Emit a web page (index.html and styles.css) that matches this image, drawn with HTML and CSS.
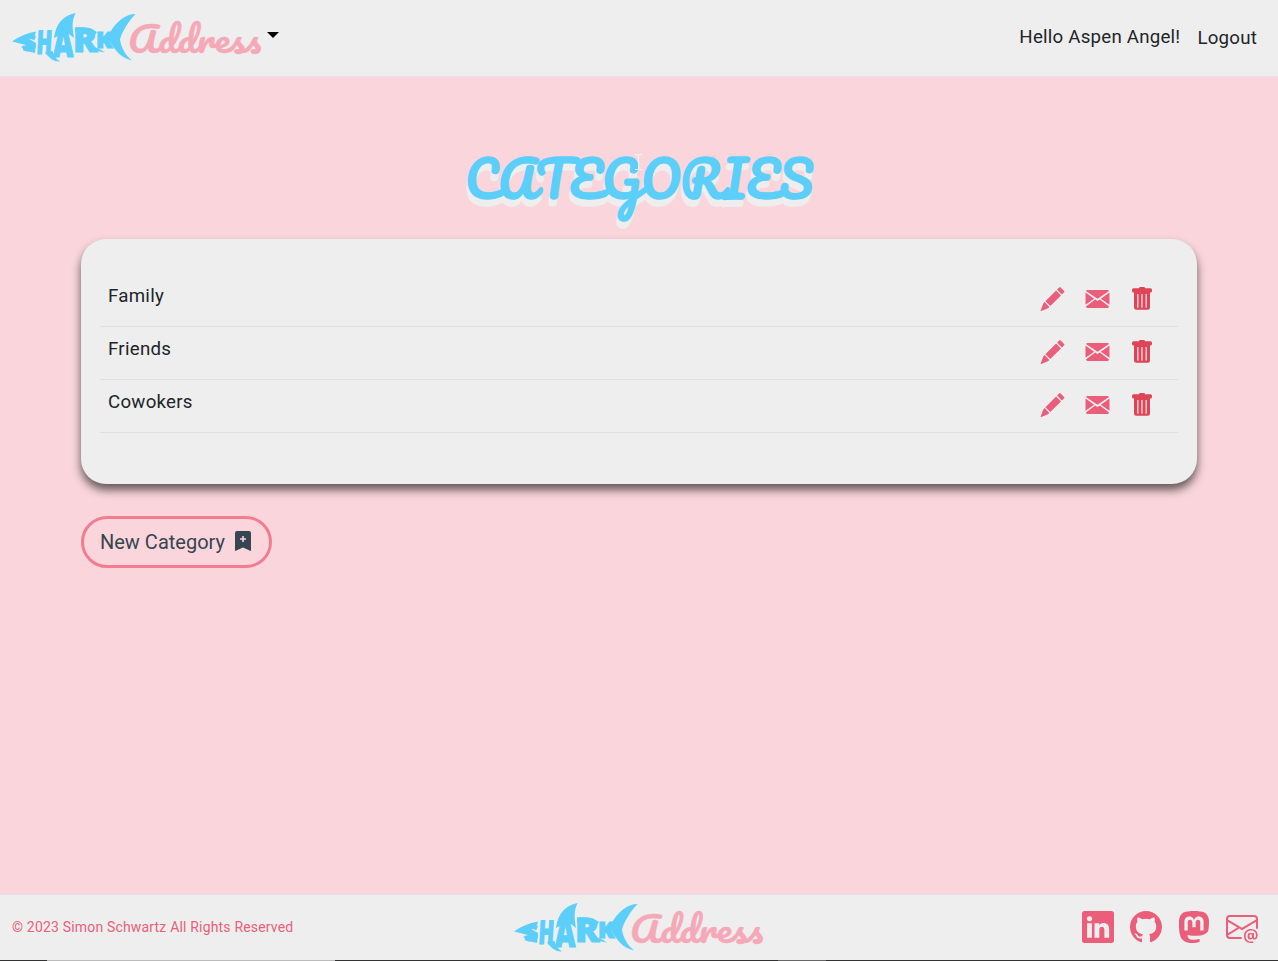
FILE: index.html
```html
<!DOCTYPE html>
<html lang="en">
<head>
<meta charset="utf-8">
<title>Shark Address - Categories</title>
<link rel="stylesheet" href="styles.css">
</head>
<body>
<svg class="sprite" aria-hidden="true">
  <symbol id="shark-body" viewBox="0 0 252 56">
    <path d="M0 29.500 Q10 22 24 19.500 L23 23 Q16 24 17 27 L24 31 L23 41 Q14 39 9 35 L14 33 Z"/>
    <path d="M42 26 C44 11 51 4 63.500 1 C60 9 60 14 62 26 L57 22 H50 Z"/>
    <path d="M33 40 L40.500 39 C42 44 44 47 48 49.500 Q39 50 33 40 Z"/>
    <path d="M63 15.500 Q77 14 85 20 L82 24 L63 20 Z"/>
    <path d="M77 35 Q84 34 93 40.500 L80 38 Z"/>
    <path d="M94 25 Q96 24 97 22 C104 10 113 2 123.500 2 C116 10 110 20 108 27.500 C109 35 113 43 120 48.500 C109 46 104 39 98 30 Z"/>
  </symbol>
  <symbol id="pencil" viewBox="0 0 24 24">
    <path d="M18.700.4a1 1 0 0 1 1.400 0l3.500 3.500a1 1 0 0 1 0 1.400L21.400 7.500 16.500 2.600zM15.600 3.500l4.900 4.900L9.800 19.100 4.900 14.200zM4.100 15.100l4.800 4.800L7.500 21.300.8 23.900Q-.2 24.200.2 23.200L2.800 16.400z"/>
  </symbol>
  <symbol id="mail" viewBox="0 0 24 18">
    <path d="M.4 1Q1 0 2.200 0H21.800Q23 0 23.600 1L12 8.700zM0 2.500L8.700 8.800 0 14.800zM24 2.500L15.300 8.800 24 14.800zM9.700 9.600L12 11l2.300-1.400 9.300 6.900Q23 18 21.800 18H2.200Q1 18 .4 16.500z"/>
  </symbol>
  <symbol id="trash" viewBox="0 0 20 23">
    <path class="trash-bars" d="M4 6h12v14H4z"/>
    <path d="M7 1.200Q7 0 8.200 0h3.600Q13 0 13 1.200H18.500Q20 1.200 20 2.700V4Q20 5.500 18.500 5.500H18V20.500Q18 22.700 15.800 22.700H4.200Q2 22.700 2 20.500V5.500H1.500Q0 5.500 0 4V2.700Q0 1.200 1.500 1.200zM5 7V20.500H6.600V7zM9.200 7V20.500h1.600V7zM13.400 7V20.500H15V7z"/>
  </symbol>
  <symbol id="bookmark" viewBox="0 0 16 20">
    <path fill-rule="evenodd" d="M0 19.500V2Q0 0 2 0h12q2 0 2 2v17.500q0 .8-.8.300L8 16.500.8 19.800Q0 20.300 0 19.500zM7.200 5v2.300H5v1.500h2.200v2.300h1.600V8.800H11V7.300H8.800V5z"/>
  </symbol>
  <symbol id="linkedin" viewBox="0 0 16 16">
    <path d="M0 1.146C0 .513.526 0 1.175 0h13.650C15.474 0 16 .513 16 1.146v13.708c0 .633-.526 1.146-1.175 1.146H1.175C.526 16 0 15.487 0 14.854V1.146zm4.943 12.248V6.169H2.542v7.225h2.401zm-1.200-8.212c.837 0 1.358-.554 1.358-1.248-.015-.709-.52-1.248-1.342-1.248-.822 0-1.359.54-1.359 1.248 0 .694.521 1.248 1.327 1.248h.016zm4.908 8.212V9.359c0-.216.016-.432.08-.586.173-.431.568-.878 1.232-.878.869 0 1.216.662 1.216 1.634v3.865h2.401V9.250c0-2.220-1.184-3.252-2.764-3.252-1.274 0-1.845.7-2.165 1.193V6.169h-2.400c.03.678 0 7.225 0 7.225h2.400z"/>
  </symbol>
  <symbol id="github" viewBox="0 0 16 16">
    <path d="M8 0C3.580 0 0 3.580 0 8c0 3.540 2.290 6.530 5.470 7.590.4.07.55-.17.55-.38 0-.19-.01-.82-.01-1.490-2.010.37-2.530-.49-2.690-.94-.09-.23-.48-.94-.82-1.130-.28-.15-.68-.52-.01-.53.63-.01 1.080.58 1.230.82.72 1.210 1.870.87 2.330.66.07-.52.28-.87.51-1.070-1.780-.2-3.640-.89-3.640-3.950 0-.87.31-1.590.82-2.150-.08-.2-.36-1.020.08-2.120 0 0 .67-.21 2.200.82.64-.18 1.320-.27 2-.27.68 0 1.360.09 2 .27 1.530-1.040 2.200-.82 2.200-.82.44 1.100.16 1.920.08 2.120.51.56.82 1.270.82 2.150 0 3.070-1.870 3.750-3.650 3.950.29.25.54.73.54 1.480 0 1.070-.01 1.930-.01 2.200 0 .21.15.46.55.38A8.012 8.012 0 0 0 16 8c0-4.420-3.580-8-8-8z"/>
  </symbol>
  <symbol id="mastodon" viewBox="0 0 16 16">
    <path d="M11.190 12.195c2.016-.24 3.770-1.475 3.990-2.603.348-1.778.32-4.339.32-4.339 0-3.470-2.286-4.488-2.286-4.488C12.062.238 10.083.017 8.027 0h-.05C5.920.017 3.942.238 2.790.765c0 0-2.285 1.017-2.285 4.488l-.002.662c-.004.64-.007 1.350.011 2.091.083 3.394.626 6.740 3.780 7.570 1.454.383 2.703.463 3.709.408 1.823-.1 2.847-.647 2.847-.647l-.06-1.317s-1.303.41-2.767.36c-1.450-.05-2.980-.156-3.215-1.928a3.614 3.614 0 0 1-.033-.496s1.424.346 3.228.428c1.103.05 2.137-.064 3.188-.189zm1.613-2.470H11.130v-4.080c0-.859-.364-1.295-1.091-1.295-.804 0-1.207.517-1.207 1.541v2.233H7.168V5.890c0-1.024-.403-1.541-1.207-1.541-.727 0-1.091.436-1.091 1.296v4.079H3.197V5.522c0-.859.22-1.541.66-2.046.456-.505 1.052-.764 1.793-.764.856 0 1.504.328 1.933.983L8 4.390l.417-.695c.429-.655 1.077-.983 1.934-.983.74 0 1.336.259 1.791.764.442.505.661 1.187.661 2.046v4.203z"/>
  </symbol>
  <symbol id="mail-at" viewBox="0 0 16 16">
    <path d="M2 2a2 2 0 0 0-2 2v8.010A2 2 0 0 0 2 14h5.500a.5.5 0 0 0 0-1H2a1 1 0 0 1-.966-.741l5.640-3.471L8 9.583l7-4.200V8.500a.5.5 0 0 0 1 0V4a2 2 0 0 0-2-2H2Zm3.708 6.208L1 11.105V5.383l4.708 2.825ZM1 4.217V4a1 1 0 0 1 1-1h12a1 1 0 0 1 1 1v.217l-7 4.200-7-4.200Z"/>
    <path d="M14.247 14.269c1.010 0 1.587-.857 1.587-2.025v-.21C15.834 10.430 14.640 9 12.520 9h-.035C10.420 9 9 10.360 9 12.432v.214C9 14.820 10.438 16 12.358 16h.044c.594 0 1.018-.074 1.237-.175v-.73c-.245.11-.673.18-1.180.18h-.044c-1.334 0-2.571-.788-2.571-2.655v-.157c0-1.657 1.058-2.724 2.640-2.724h.04c1.535 0 2.484 1.050 2.484 2.326v.118c0 .975-.324 1.390-.639 1.390-.232 0-.41-.148-.41-.42v-2.190h-.906v.569h-.03c-.084-.298-.368-.63-.954-.63-.778 0-1.259.555-1.259 1.400v.528c0 .892.49 1.434 1.260 1.434.471 0 .896-.227 1.014-.643h.043c.118.42.617.648 1.120.648Zm-2.453-1.588v-.227c0-.546.227-.791.573-.791.297 0 .572.192.572.708v.367c0 .573-.253.744-.564.744-.354 0-.581-.215-.581-.8Z"/>
  </symbol>
</svg>

<header class="navbar">
  <a class="brand">
    <svg class="logo" viewBox="0 0 252 56">
      <g class="shark">
        <use href="#shark-body" width="252" height="56"/>
        <text transform="translate(10.500 38.500) scale(1 1)" font-size="23">S</text>
        <text transform="translate(24 42) skewX(-3) scale(.62 1)" font-size="33">H</text>
        <text transform="translate(41 45) scale(.72 1)" font-size="39">A</text>
        <text transform="translate(61 39.500) scale(1.080 1)" font-size="33">R</text>
        <text transform="translate(84 36) scale(1.100 1)" font-size="22">K</text>
      </g>
      <text class="script" x="116" y="41" textLength="133" lengthAdjust="spacingAndGlyphs">Address</text>
    </svg>
    <span class="caret"></span>
  </a>
  <nav class="account"><span>Hello Aspen Angel!</span><a class="logout">Logout</a></nav>
</header>

<main class="content">
  <h1 class="title">CATEGORIES<svg class="cursor" viewBox="0 0 7 16"><path d="M0 .5h3m1 0h3M3.500 1v14M0 15.500h3m1 0h3"/></svg></h1>
  <section class="card">
    <div class="row"><span>Family</span><div class="actions"><svg class="pencil"><use href="#pencil"/></svg><svg class="mail"><use href="#mail"/></svg><svg class="trash"><use href="#trash"/></svg></div></div>
    <div class="row"><span>Friends</span><div class="actions"><svg class="pencil"><use href="#pencil"/></svg><svg class="mail"><use href="#mail"/></svg><svg class="trash"><use href="#trash"/></svg></div></div>
    <div class="row"><span>Cowokers</span><div class="actions"><svg class="pencil"><use href="#pencil"/></svg><svg class="mail"><use href="#mail"/></svg><svg class="trash"><use href="#trash"/></svg></div></div>
  </section>
  <a class="new-category">New Category<svg class="bookmark"><use href="#bookmark"/></svg></a>
</main>

<footer class="footer">
  <span class="copyright">© 2023 Simon Schwartz All Rights Reserved</span>
  <svg class="logo" viewBox="0 0 252 56">
    <g class="shark">
      <use href="#shark-body" width="252" height="56"/>
      <text transform="translate(10.500 38.500) scale(1 1)" font-size="23">S</text>
      <text transform="translate(24 42) skewX(-3) scale(.62 1)" font-size="33">H</text>
      <text transform="translate(41 45) scale(.72 1)" font-size="39">A</text>
      <text transform="translate(61 39.500) scale(1.080 1)" font-size="33">R</text>
      <text transform="translate(84 36) scale(1.100 1)" font-size="22">K</text>
    </g>
    <text class="script" x="116" y="41" textLength="133" lengthAdjust="spacingAndGlyphs">Address</text>
  </svg>
  <div class="social"><svg><use href="#linkedin"/></svg><svg><use href="#github"/></svg><svg><use href="#mastodon"/></svg><svg><use href="#mail-at"/></svg></div>
</footer>
<div class="edge"></div>
</body>
</html>
```
FILE: styles.css
```css
* { box-sizing: border-box; }
body {
  margin: 0;
  height: 961px;
  display: flex;
  flex-direction: column;
  overflow: hidden;
  background: #fad6dc;
  color: #212529;
  font: 18.700px/28px Roboto, sans-serif;
  letter-spacing: .26px;
}
svg { display: block; fill: currentColor; }
.sprite { position: absolute; width: 0; height: 0; }
.navbar {
  height: 77px;
  flex: none;
  display: flex;
  justify-content: space-between;
  padding: 12px 21px 0 12px;
  background: #eee;
  border-bottom: 1px solid #e4e2e4;
}
.brand { display: flex; gap: 3px; }
.logo { width: 252px; height: 56px; overflow: visible; letter-spacing: 0; }
.shark { fill: #5bcefa; font-family: "Open Sans", sans-serif; font-weight: 800; }
.shark text { stroke: #5bcefa; stroke-width: 1.100; }
.script {
  fill: #f5a9b8;
  stroke: #f5a9b8;
  stroke-width: .4;
  font-family: Pacifico, Lato, sans-serif;
  font-size: 35px;
}
.caret {
  width: 12px;
  height: 6px;
  margin-top: 20px;
  border: 6px solid transparent;
  border-top-color: #000;
  border-bottom: 0;
}
.account { display: flex; gap: 17px; padding-top: 11px; letter-spacing: .22px; }
.logout { padding-top: 1px; }
.content { flex: 1; padding: 67px 81px 0; }
.title {
  position: relative;
  margin: 0;
  height: 95px;
  text-align: center;
  color: #5bcefa;
  font: 700 48px/69px Pacifico, Lato, sans-serif;
  letter-spacing: 0;
  text-shadow: -1px 7px 0 #eee;
}
.cursor {
  position: absolute;
  left: 554px;
  top: 10px;
  width: 7px;
  height: 16px;
  fill: none;
  stroke: #f4f4f4;
}
.card {
  position: relative;
  height: 245px;
  padding: 35px 19px 0;
  border-radius: 25px;
  background: #eee;
  box-shadow: 0 6px 10px rgba(0, 0, 0, .6);
}
.row {
  height: 53px;
  display: flex;
  justify-content: space-between;
  padding: 8px 26px 0 8px;
  border-bottom: 1px solid #dfe0e1;
}
.actions { display: flex; padding-top: 5px; color: #eb5e7b; }
.pencil { width: 25px; height: 24px; margin-right: 20px; }
.mail { width: 25px; height: 18px; margin: 3px 22px 0 0; }
.trash { width: 20px; height: 23px; color: #dc4657; }
.trash-bars { fill: #f3bfc8; }
.new-category {
  width: 191px;
  height: 52px;
  margin-top: 32px;
  display: flex;
  align-items: center;
  gap: 10px;
  padding-left: 16px;
  border: 3px solid #f27d93;
  border-radius: 26px;
  color: #36454f;
  font-size: 20px;
  letter-spacing: 0;
}
.bookmark { width: 16px; height: 20px; margin-top: -2px; }
.footer {
  height: 66px;
  flex: none;
  display: grid;
  grid-template-columns: 1fr 252px 1fr;
  align-items: start;
  padding: 7px 20px 0 12px;
  background: #eee;
  border-top: 1px solid #dee2e6;
  color: #eb5e7b;
}
.copyright { padding-top: 11px; font-size: 14px; letter-spacing: .18px; }
.footer .logo { margin-left: 5px; }
.social { display: flex; justify-content: flex-end; gap: 16px; padding-top: 9px; }
.social svg { width: 32px; height: 32px; }
.edge { height: 1px; flex: none; background: linear-gradient(90deg, #333 47px, #bbb 47px 335px, #333 335px 778px, #666 778px 826px, #333 826px); }
```
